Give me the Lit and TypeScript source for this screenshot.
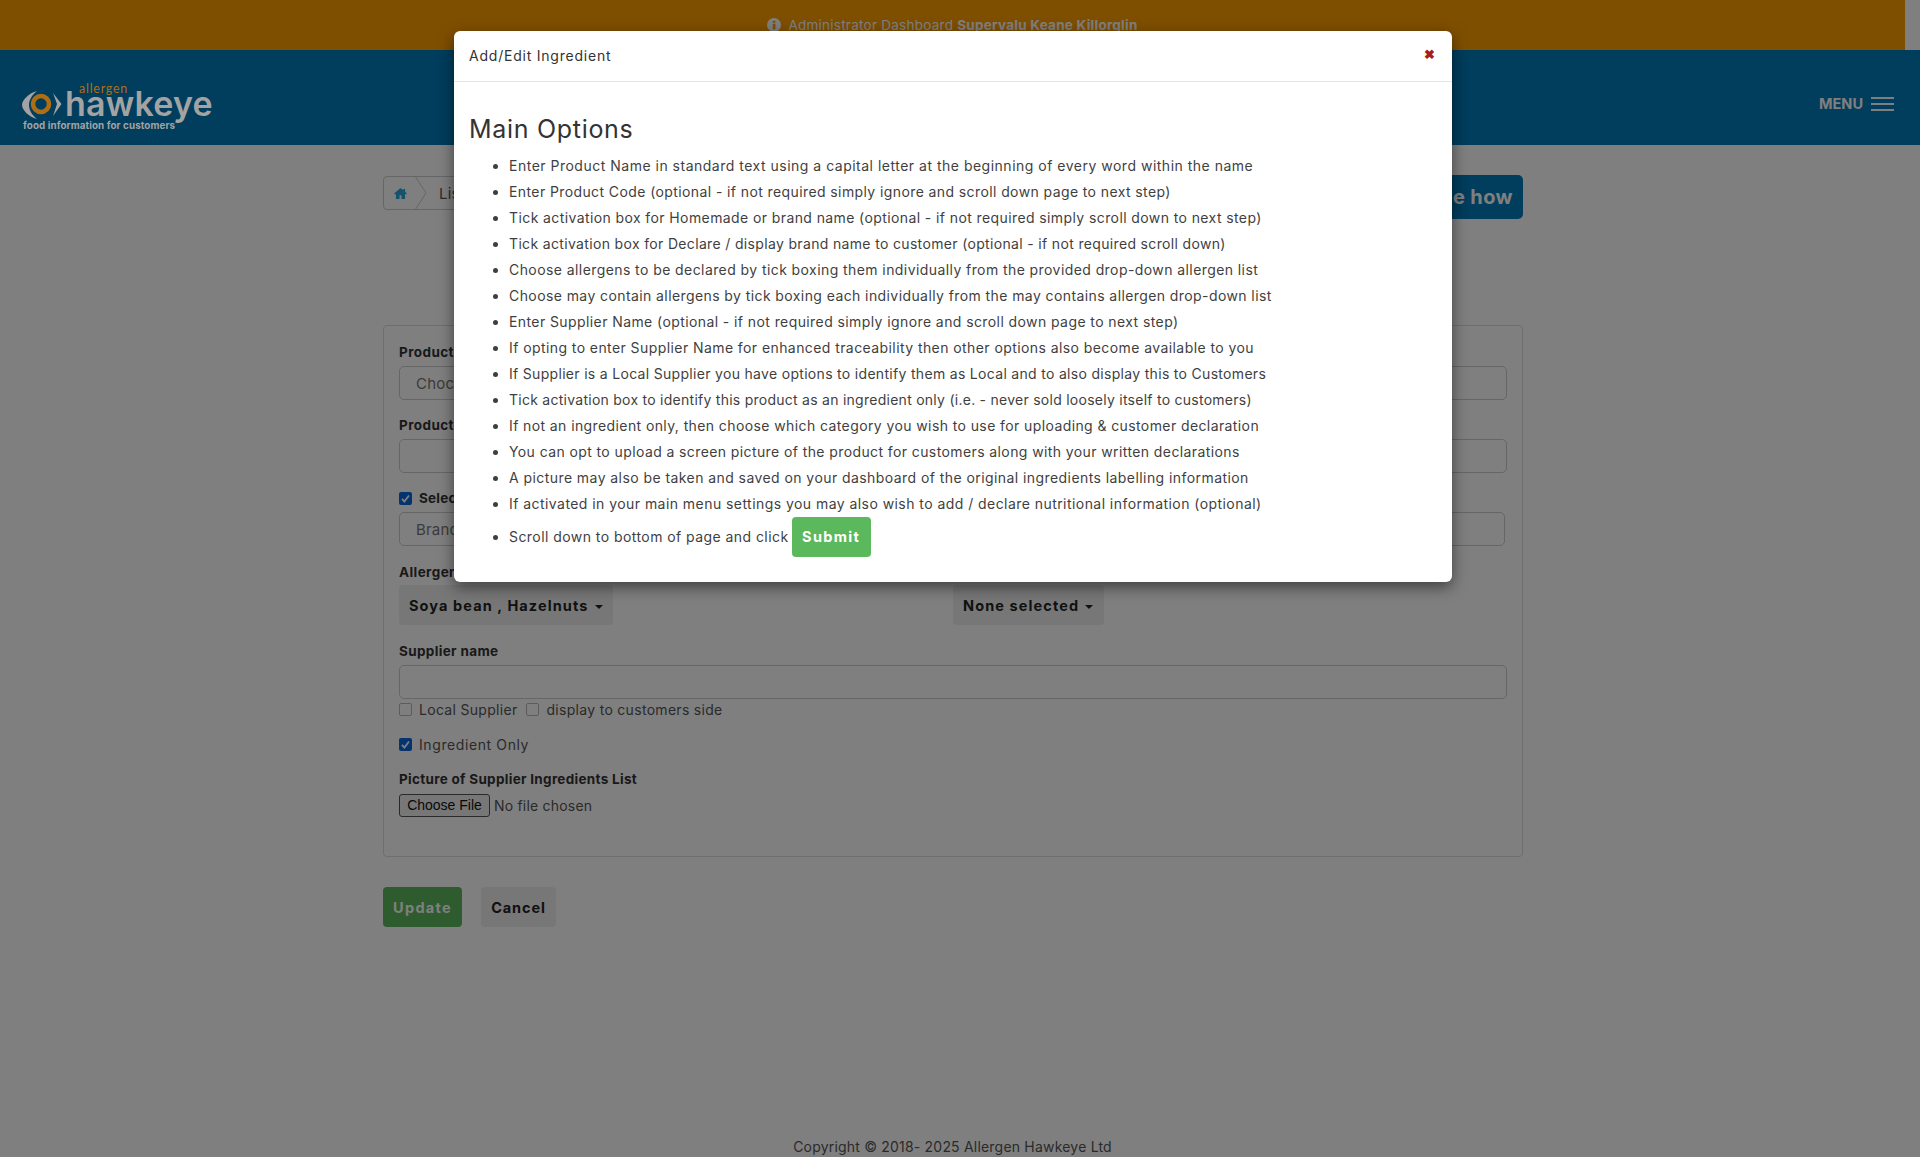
import { LitElement, html, css, svg } from "lit";
import { customElement } from "lit/decorators.js";

const items: [string, number][] = [
  ["Enter Product Name in standard text using a capital letter at the beginning of every word within the name", .5],
  ["Enter Product Code (optional - if not required simply ignore and scroll down page to next step)", .4],
  ["Tick activation box for Homemade or brand name (optional - if not required simply scroll down to next step)", .4],
  ["Tick activation box for Declare / display brand name to customer (optional - if not required scroll down)", .34],
  ["Choose allergens to be declared by tick boxing them individually from the provided drop-down allergen list", .42],
  ["Choose may contain allergens by tick boxing each individually from the may contains allergen drop-down list", .41],
  ["Enter Supplier Name (optional - if not required simply ignore and scroll down page to next step)", .41],
  ["If opting to enter Supplier Name for enhanced traceability then other options also become available to you", .42],
  ["If Supplier is a Local Supplier you have options to identify them as Local and to also display this to Customers", .31],
  ["Tick activation box to identify this product as an ingredient only (i.e. - never sold loosely itself to customers)", .26],
  ["If not an ingredient only, then choose which category you wish to use for uploading & customer declaration", .4],
  ["You can opt to upload a screen picture of the product for customers along with your written declarations", .4],
  ["A picture may also be taken and saved on your dashboard of the original ingredients labelling information", .43],
  ["If activated in your main menu settings you may also wish to add / declare nutritional information (optional)", .445],
];

const check = svg`<svg viewBox="0 0 13 13" width="13" height="13"><rect width="13" height="13" rx="2" fill="#0b66dc"/><path d="M3 6.8 5.4 9.5 10 3.5" fill="none" stroke="#fff" stroke-width="1.8"/></svg>`;

@customElement("app-root")
export class AppRoot extends LitElement {
  static styles = css`
    :host { display: block; position: relative; height: 1157px; overflow: hidden; background: #fff; color: #333;
      font-family: Inter, "Open Sans", sans-serif; font-size: 14px; letter-spacing: .2px; }
    * { box-sizing: border-box; }
    .top { width: 1905px; height: 50px; background: #fe9e00; color: #fff; display: flex; justify-content: center; gap: 7px; padding-top: 16px; font-size: 13.5px; line-height: 18px; letter-spacing: .25px; }
    .top svg { margin-top: 2px; }
    .nav { height: 95px; background: #027ab8; display: flex; justify-content: space-between; position: relative; }
    .logo { margin: 32px 0 0 21px; position: relative; z-index: 1; width: 200px; height: 50px; }
    .logo .allergen { position: absolute; left: 58px; top: 3px; font: 400 12.5px/8px Lato, sans-serif; letter-spacing: .75px; color: #b06e14; }
    .logo .hawk { position: absolute; left: 44px; top: 11px; font: 600 34px/22px Inter, sans-serif; letter-spacing: .2px; color: #a3a3a3; }
    .logo .tag { position: absolute; left: 2px; top: 38px; font: 700 9.8px/12px Inter, sans-serif; letter-spacing: .1px; color: #a3a3a3; white-space: nowrap; }
    .logo svg { position: absolute; left: 1px; top: 8px; }
    .menu { display: flex; align-items: center; gap: 8px; margin-right: 26px; padding-top: 12px; font-weight: 700; font-size: 14.5px; color: #fff; letter-spacing: 0; }
    .bars { width: 23px; height: 14px; border-top: 2px solid #fff; border-bottom: 2px solid #fff; display: flex; align-items: center; }
    .bars i { display: block; width: 100%; height: 2px; background: #fff; }
    .wrap { width: 1140px; margin-left: 383px; }
    .crumbrow { display: flex; justify-content: space-between; align-items: flex-start; padding-top: 31px; height: 180px; }
    .crumb { width: 200px; height: 34px; border: 1px solid #ccc; border-radius: 4px; display: flex; align-items: center; overflow: hidden; }
    .crumb .home { width: 31px; padding-left: 10px; display: flex; }
    .crumb .sep { width: 12px; height: 34px; }
    .crumb .t { margin-left: 12px; font-size: 15px; color: #555; }
    .how { height: 44px; margin-top: -1px; padding: 0 10px; background: #027ab8; color: #fff; font-size: 20px; font-weight: 700; border-radius: 5px; display: flex; align-items: center; letter-spacing: .4px; }
    .panel { height: 532px; border: 1px solid #ddd; border-radius: 4px; padding: 18px 15px 0; }
    .lab { font-weight: 700; font-size: 13.5px; line-height: 16px; color: #333; letter-spacing: .42px; }
    .input { height: 34px; border: 1px solid #ccc; border-radius: 5px; padding: 0 16px; display: flex; align-items: center; font-size: 15px; color: #777; margin-top: 6px; }
    .f2 { margin-top: 17px; }
    .c { display: flex; align-items: center; gap: 7px; }
    .c span { font-size: 14px; color: #555; letter-spacing: .3px; }
    .box { width: 13px; height: 13px; border: 1px solid #b9b9b9; border-radius: 2px; display: block; background: #fff; }
    .selrow { margin-top: 17px; height: 16px; }
    .selrow b { font-size: 13.5px; }
    .selinput { width: 1106px; }
    .allergens { margin-top: 18px; }
    .dds { display: flex; margin-top: 5px; }
    .dd { height: 40px; background: #eee; border-radius: 4px; color: #222; font-weight: 700; font-size: 14.5px; letter-spacing: 1.1px; display: flex; align-items: center; gap: 6px; padding: 0 9px 0 10px; }
    .caret { width: 0; height: 0; border-left: 4px solid transparent; border-right: 4px solid transparent; border-top: 4px solid #222; margin-top: 3px; }
    .dd.a { width: 214px; }
    .dd.b { width: 151px; margin-left: 340px; }
    .sup { margin-top: 18px; letter-spacing: .35px; }
    .checks { display: flex; gap: 9px; margin-top: 2px; height: 16px; }
    .ing { margin-top: 19px; height: 16px; }
    .c.ing span { letter-spacing: .6px; }
    .pic { margin-top: 19px; letter-spacing: .3px; }
    .file { display: flex; align-items: center; gap: 4px; margin-top: 7px; color: #555; }
    .file .btn { width: 91px; height: 23px; border: 1px solid #555; border-radius: 3px; background: #efefef; font: 400 14px/21px "Liberation Sans", sans-serif; color: #111; text-align: center; letter-spacing: 0; }
    .actions { display: flex; gap: 19px; margin-top: 30px; }
    .bt { height: 40px; display: flex; align-items: center; justify-content: center; border-radius: 4px; font-weight: 700; font-size: 14.5px; letter-spacing: .9px; }
    .up { width: 79px; background: #5cb85c; color: #fff; letter-spacing: 1.3px; }
    .ca { width: 75px; background: #eee; color: #222; }
    .foot { position: absolute; left: 0; width: 1905px; top: 1137px; text-align: center; line-height: 20px; font-size: 14px; color: #555; }
    .shade { position: absolute; inset: 0; background: rgba(0,0,0,.5); }
    .modal { position: absolute; z-index: 2; left: 454px; top: 31px; width: 998px; height: 551px; background: #fff; border-radius: 6px; box-shadow: 0 5px 15px rgba(0,0,0,.5); color: #333; }
    .mh { height: 51px; border-bottom: 1px solid #e5e5e5; display: flex; justify-content: space-between; align-items: center; padding: 0 17px 2px 15px; font-size: 14px; letter-spacing: .78px; }
    .mh .x { color: #a81c1c; font-size: 13px; font-weight: 900; margin-top: -3px; letter-spacing: 0; }
    .mb { padding: 30px 15px 0; }
    h2 { margin: 0; font-weight: 400; font-size: 25px; line-height: 34px; letter-spacing: .7px; color: #333; }
    ul { margin: 7px 0 0; padding: 0 0 0 40px; font-size: 14px; line-height: 26px; color: #3f3f3f; letter-spacing: .44px; }
    li { height: 26px; white-space: nowrap; }
    li.last { height: 40px; }
    li.last .inner { display: inline-flex; align-items: center; gap: 3px; height: 40px; }
    .sub { height: 40px; width: 79px; background: #5cb85c; color: #fff; border-radius: 4px; display: inline-flex; align-items: center; justify-content: center; font-weight: 700; font-size: 14.5px; letter-spacing: 1.3px; }
  `;

  render() {
    return html`
      <div class="top">
        <svg viewBox="0 0 14 14" width="14" height="14"><circle cx="7" cy="7" r="7" fill="#fff"/><rect x="5.8" y="5.8" width="2.6" height="5.4" fill="#fe9e00"/><rect x="5.8" y="2.8" width="2.6" height="2" fill="#fe9e00"/></svg>
        <span>Administrator Dashboard <b>Supervalu Keane Killorglin</b></span>
      </div>
      <div class="nav">
        <div class="logo">
          <svg width="42" height="30" viewBox="0 0 42 30">
            <path d="M15 1C7 3 0 10 0 15s7 12 15 14C10 25 7 20 7 15s3-10 8-14Z" fill="#a3a3a3"/>
            <circle cx="19" cy="14" r="8" fill="none" stroke="#b06e14" stroke-width="4.5"/>
            <path d="M31 3 39.5 14 31 26 35 14Z" fill="#a3a3a3"/>
          </svg>
          <span class="hawk">hawkeye</span>
          <span class="allergen">allergen</span>
          <span class="tag">food information for customers</span>
        </div>
        <div class="menu">MENU <span class="bars"><i></i></span></div>
      </div>
      <div class="wrap">
        <div class="crumbrow">
          <div class="crumb">
            <span class="home"><svg viewBox="0 0 14 12" width="13" height="11"><path d="M7 0 0 6l1 1 1-.8V12h4V8h2v4h4V6.2l1 .8 1-1-2-1.8V1h-2v1.5Z" fill="#2aa6d8"/></svg></span>
            <svg class="sep" viewBox="0 0 12 34"><path d="M0 0 11 17 0 34" fill="none" stroke="#ccc"/></svg>
            <span class="t">List</span>
          </div>
          <div class="how">See how</div>
        </div>
        <div class="panel">
          <div class="lab">Product Name</div>
          <div class="input">Chocolate</div>
          <div class="lab f2">Product Code</div>
          <div class="input"></div>
          <div class="c selrow">${check}<b>Select</b></div>
          <div class="input selinput">Brand</div>
          <div class="lab allergens">Allergens</div>
          <div class="dds">
            <div class="dd a">Soya bean , Hazelnuts <i class="caret"></i></div>
            <div class="dd b">None selected <i class="caret"></i></div>
          </div>
          <div class="lab sup">Supplier name</div>
          <div class="input"></div>
          <div class="checks">
            <div class="c"><i class="box"></i><span>Local Supplier</span></div>
            <div class="c"><i class="box"></i><span>display to customers side</span></div>
          </div>
          <div class="c ing">${check}<span>Ingredient Only</span></div>
          <div class="lab pic">Picture of Supplier Ingredients List</div>
          <div class="file"><div class="btn">Choose File</div><span>No file chosen</span></div>
        </div>
        <div class="actions">
          <div class="bt up">Update</div>
          <div class="bt ca">Cancel</div>
        </div>
      </div>
      <div class="foot">Copyright © 2018- 2025 Allergen Hawkeye Ltd</div>
      <div class="shade"></div>
      <div class="modal">
        <div class="mh"><span>Add/Edit Ingredient</span><span class="x">✖</span></div>
        <div class="mb">
          <h2>Main Options</h2>
          <ul>
            ${items.map(([t, ls]) => html`<li style="letter-spacing:${ls}px">${t}</li>`)}
            <li class="last"><span class="inner">Scroll down to bottom of page and click <span class="sub">Submit</span></span></li>
          </ul>
        </div>
      </div>
    `;
  }
}
